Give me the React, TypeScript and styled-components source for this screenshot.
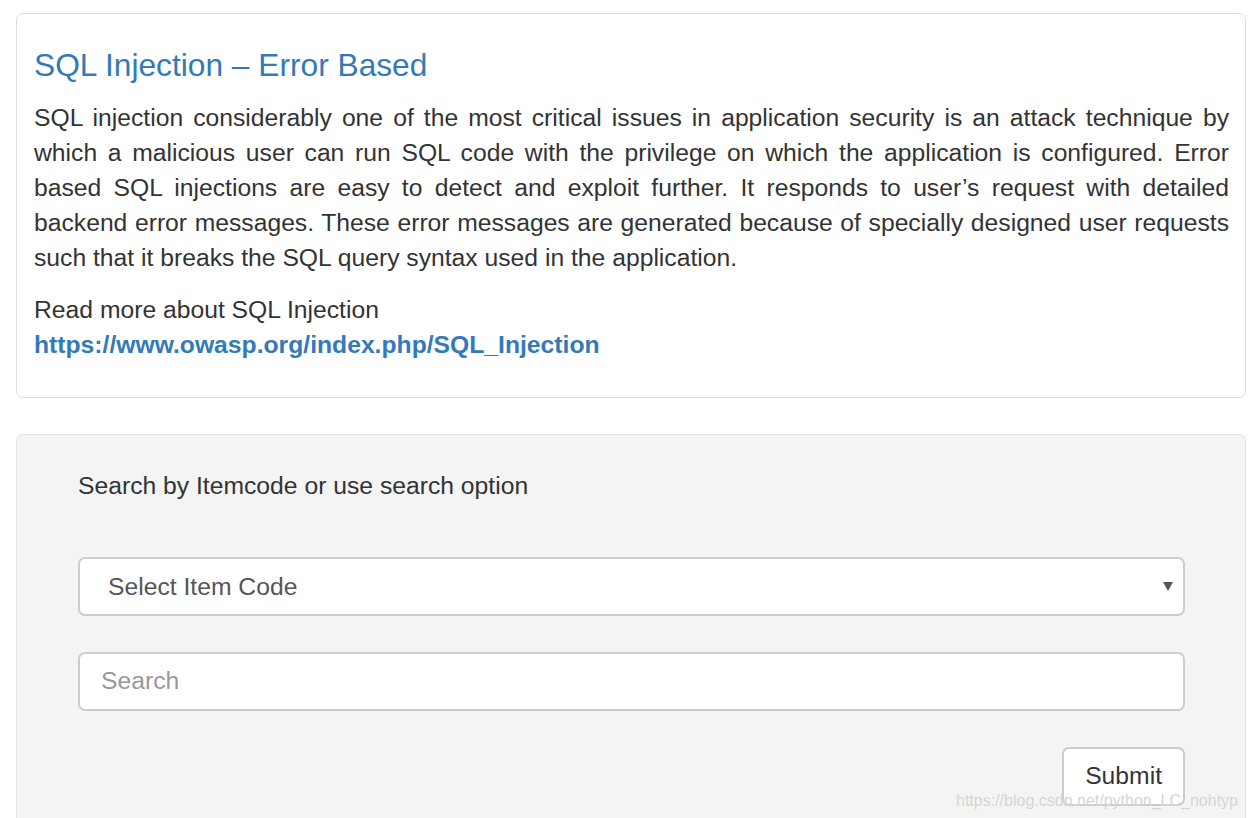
import React from "react";
import styled, { createGlobalStyle } from "styled-components";

const Global = createGlobalStyle`
  html, body { margin: 0; padding: 0; background: #fff; }
  body {
    font-family: "Liberation Sans", Arial, Helvetica, sans-serif;
    font-size: 24.7px;
    line-height: 35px;
    color: #333;
    height: 818px;
    overflow: hidden;
  }
  * { box-sizing: border-box; }
`;

const Page = styled.div`
  position: relative;
  padding: 13px 2px 0 16px;
  display: flex;
  flex-direction: column;
  gap: 36px;
  height: 818px;
`;

const InfoPanel = styled.section`
  border: 1px solid #dddddd;
  border-radius: 7px;
  background: #fff;
  padding: 17px 16px 18px 17px;
`;

const Title = styled.h4`
  margin: 17px 0 17px;
  font-size: 31.7px;
  font-weight: 400;
  line-height: 1.1;
  color: #337ab7;
`;

const Para = styled.p`
  margin: 0 0 17px;
  text-align: justify;
`;

const Link = styled.a`
  color: #337ab7;
  font-weight: 700;
  text-decoration: none;
`;

const FormPanel = styled.section`
  flex: 1;
  border: 1px solid #e3e3e3;
  border-bottom: none;
  border-radius: 7px 7px 0 0;
  background: #f4f4f4;
  padding: 33px 60px 0 61px;
  display: flex;
  flex-direction: column;
`;

const Label = styled.div`
  margin-bottom: 54px;
`;

const SelectWrap = styled.div`
  position: relative;
  margin-bottom: 36px;
`;

const Select = styled.select`
  appearance: none;
  -webkit-appearance: none;
  width: 100%;
  height: 59px;
  border: 2px solid #cccccc;
  border-radius: 7px;
  background: #fff;
  padding: 0 40px 0 28px;
  font-family: inherit;
  font-size: 24.7px;
  color: #555;
  outline: none;
`;

const Arrow = styled.span`
  position: absolute;
  right: 12px;
  top: 25px;
  width: 0;
  height: 0;
  border-left: 5px solid transparent;
  border-right: 5px solid transparent;
  border-top: 9px solid #555;
  pointer-events: none;
`;

const Input = styled.input`
  width: 100%;
  height: 59px;
  border: 2px solid #cccccc;
  border-radius: 7px;
  background: #fff;
  padding: 0 21px;
  font-family: inherit;
  font-size: 24.7px;
  color: #555;
  outline: none;
  margin-bottom: 36px;
  &::placeholder { color: #999; }
`;

const Actions = styled.div`
  display: flex;
  justify-content: flex-end;
`;

const Button = styled.button`
  height: 59px;
  padding: 0 21px;
  border: 2px solid #cccccc;
  border-radius: 7px;
  background: #fff;
  font-family: inherit;
  font-size: 24.7px;
  color: #333;
`;

const Watermark = styled.div`
  position: absolute;
  right: 10px;
  bottom: 6px;
  font-size: 16px;
  line-height: 22px;
  color: rgba(205, 205, 205, 0.85);
  text-shadow: 0 0 1px rgba(255, 255, 255, 0.6);
  pointer-events: none;
`;

export default function App() {
  return (
    <>
      <Global />
      <Page>
        <InfoPanel>
          <Title>SQL Injection – Error Based</Title>
          <Para>
            SQL injection considerably one of the most critical issues in application security is an attack
            technique by which a malicious user can run SQL code with the privilege on which the application is
            configured. Error based SQL injections are easy to detect and exploit further. It responds to user’s
            request with detailed backend error messages. These error messages are generated because of
            specially designed user requests such that it breaks the SQL query syntax used in the application.
          </Para>
          <Para>
            Read more about SQL Injection
            <br />
            <Link href="#">https://www.owasp.org/index.php/SQL_Injection</Link>
          </Para>
        </InfoPanel>
        <FormPanel>
          <Label>Search by Itemcode or use search option</Label>
          <SelectWrap>
            <Select defaultValue="">
              <option value="">Select Item Code</option>
            </Select>
            <Arrow />
          </SelectWrap>
          <Input placeholder="Search" />
          <Actions>
            <Button>Submit</Button>
          </Actions>
        </FormPanel>
        <Watermark>https://blog.csdn.net/python_LC_nohtyp</Watermark>
      </Page>
    </>
  );
}
